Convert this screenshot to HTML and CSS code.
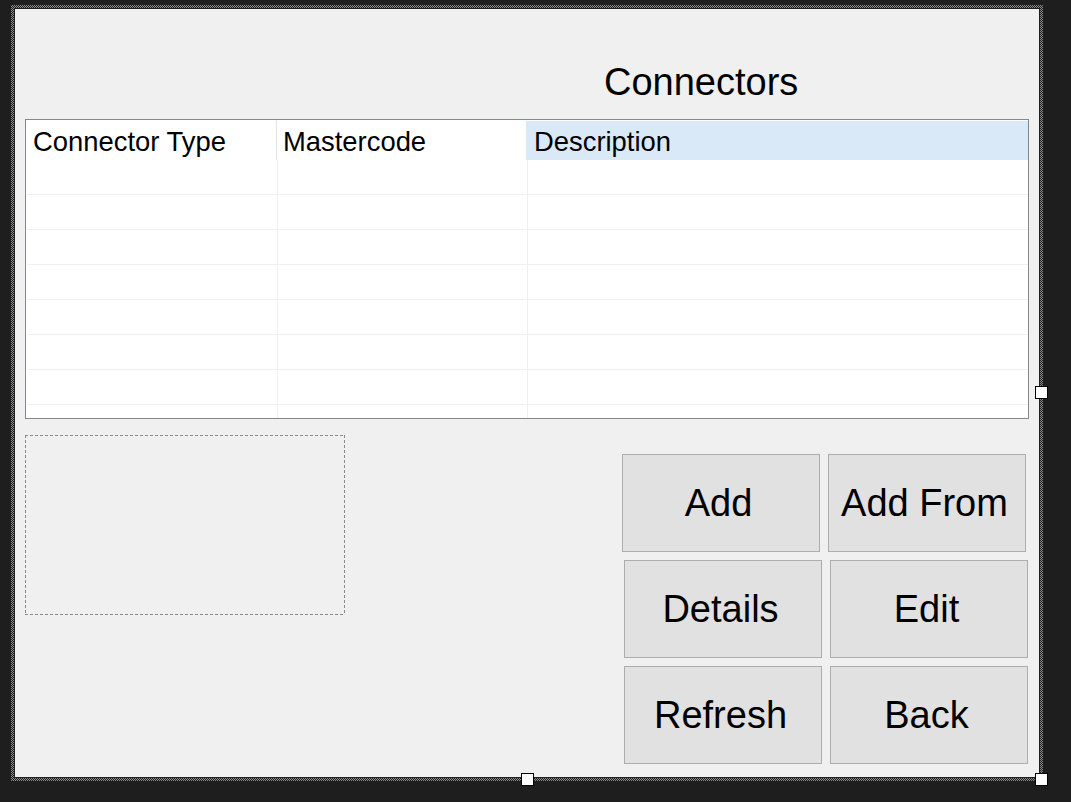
FILE: index.html
```html
<!DOCTYPE html>
<html>
<head>
<meta charset="utf-8">
<link rel="stylesheet" href="styles.css">
</head>
<body>
<div class="frame">
  <div class="gap">
    <div class="form">
      <div class="title">Connectors</div>
      <div class="grid">
        <div class="ghead">
          <div class="hc hc1">Connector Type</div>
          <div class="hc hc2">Mastercode</div>
          <div class="hc hc3">Description</div>
        </div>
        <div class="grow"><div class="c c1"></div><div class="c c2"></div><div class="c c3"></div></div>
        <div class="grow"><div class="c c1"></div><div class="c c2"></div><div class="c c3"></div></div>
        <div class="grow"><div class="c c1"></div><div class="c c2"></div><div class="c c3"></div></div>
        <div class="grow"><div class="c c1"></div><div class="c c2"></div><div class="c c3"></div></div>
        <div class="grow"><div class="c c1"></div><div class="c c2"></div><div class="c c3"></div></div>
        <div class="grow"><div class="c c1"></div><div class="c c2"></div><div class="c c3"></div></div>
        <div class="grow"><div class="c c1"></div><div class="c c2"></div><div class="c c3"></div></div>
        <div class="grow"><div class="c c1"></div><div class="c c2"></div><div class="c c3"></div></div>
      </div>
      <div class="lower">
        <div class="dash"></div>
        <div class="buttons">
          <div class="brow first">
            <div class="btn">Add</div>
            <div class="btn">Add From</div>
          </div>
          <div class="brow">
            <div class="btn">Details</div>
            <div class="btn">Edit</div>
          </div>
          <div class="brow">
            <div class="btn">Refresh</div>
            <div class="btn">Back</div>
          </div>
        </div>
      </div>
    </div>
  </div>
  <div class="handle h-right"></div>
  <div class="handle h-bottom"></div>
  <div class="handle h-corner"></div>
</div>
</body>
</html>
```

FILE: styles.css
```css
html, body {
  margin: 0;
  padding: 0;
}
body {
  background: #1e1e1e;
  width: 1071px;
  height: 802px;
  overflow: hidden;
  padding: 5px 0 0 11px;
  box-sizing: border-box;
  font-family: "Liberation Sans", Arial, sans-serif;
  color: #000;
}
.frame {
  position: relative;
  width: 1032px;
  height: 776px;
  box-sizing: border-box;
  padding: 3px;
  background-color: #1e1e1e;
  background-image: conic-gradient(#8c8c8c 25%, transparent 0 50%, #8c8c8c 0 75%, transparent 0);
  background-size: 2px 2px;
}
.gap {
  padding: 1px;
  background: #1e1e1e;
}
.form {
  width: 1024px;
  height: 768px;
  box-sizing: border-box;
  padding: 0 10px;
  background: #f0f0f0;
  overflow: hidden;
}
.title {
  height: 110px;
  box-sizing: border-box;
  padding: 52px 0 0 579px;
  font-size: 38px;
  line-height: 42px;
  white-space: nowrap;
}
.grid {
  width: 1004px;
  height: 300px;
  box-sizing: border-box;
  border: 1px solid #828790;
  background: #fff;
  overflow: hidden;
}
.ghead {
  display: flex;
  height: 40px;
}
.hc {
  box-sizing: border-box;
  height: 40px;
  padding: 7px 0 0 6px;
  font-size: 27.4px;
  line-height: 30px;
  white-space: nowrap;
}
.hc1 {
  width: 251px;
  border-right: 1px solid #e3e3e3;
  border-top: 1px solid #fff;
  padding-top: 6px;
  padding-left: 7px;
}
.hc2 {
  width: 249px;
}
.hc3 {
  flex: 1;
  background: #d9e9f7;
  border-top: 1px solid #fff;
  padding-top: 6px;
  padding-left: 8px;
}
.grow {
  display: flex;
  height: 35px;
  box-sizing: border-box;
  margin-left: 1px;
  border-bottom: 1px solid #f0f0f0;
}
.c {
  box-sizing: border-box;
  height: 35px;
}
.c1 {
  width: 251px;
  border-right: 1px solid #f0f0f0;
}
.c2 {
  width: 250px;
  border-right: 1px solid #f0f0f0;
}
.c3 {
  flex: 1;
}
.lower {
  display: flex;
  margin-top: 16px;
}
.dash {
  width: 320px;
  height: 180px;
  flex: none;
  background:
    repeating-linear-gradient(90deg, #8a8a8a 0 3px, transparent 3px 5px) left top / 100% 1px no-repeat,
    repeating-linear-gradient(90deg, #8a8a8a 0 3px, transparent 3px 5px) left bottom / 100% 1px no-repeat,
    repeating-linear-gradient(180deg, #8a8a8a 0 3px, transparent 3px 5px) left top / 1px 100% no-repeat,
    repeating-linear-gradient(180deg, #8a8a8a 0 3px, transparent 3px 5px) right top / 1px 100% no-repeat;
}
.buttons {
  margin-left: 279px;
  margin-top: 19px;
  display: flex;
  flex-direction: column;
  gap: 8px;
}
.brow {
  display: flex;
  gap: 8px;
}
.brow.first {
  margin-left: -2px;
}
.btn {
  width: 198px;
  height: 98px;
  box-sizing: border-box;
  border: 1px solid #adadad;
  background: #e1e1e1;
  display: flex;
  align-items: center;
  justify-content: center;
  padding-right: 5px;
  font-size: 38px;
  white-space: nowrap;
}
.handle {
  position: absolute;
  width: 13px;
  height: 13px;
  box-sizing: border-box;
  border: 1px solid #000;
  background: #fff;
}
.h-right {
  left: 1024px;
  top: 381px;
}
.h-bottom {
  left: 510px;
  top: 768px;
}
.h-corner {
  left: 1024px;
  top: 768px;
}
```
